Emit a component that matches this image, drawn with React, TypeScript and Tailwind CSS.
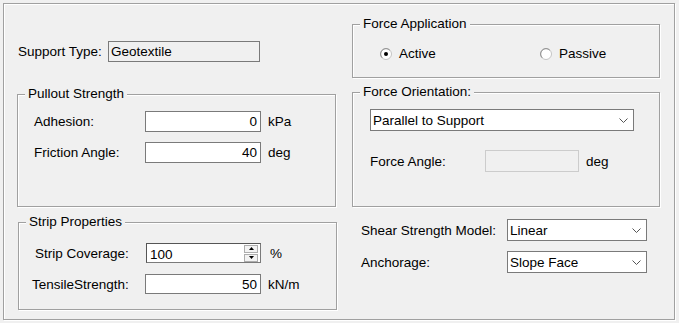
import React from "react";

const Chevron = () => (
  <svg width="9" height="5" viewBox="0 0 9 5" className="shrink-0">
    <polyline points="0.5,0.5 4.5,4.5 8.5,0.5" fill="none" stroke="#555" strokeWidth="1" />
  </svg>
);

const Radio = ({ checked }: { checked?: boolean }) => (
  <svg width="12" height="12" viewBox="0 0 12 12" className="shrink-0">
    <circle cx="6" cy="6" r="5.5" fill="#fff" stroke="#c4c4c4" />
    <path d="M2.2 9.8 A5 5 0 0 1 9.8 2.2" fill="none" stroke="#8e8e8e" strokeWidth="1" />
    {checked && <circle cx="6" cy="6" r="2" fill="#000" />}
  </svg>
);

const Group = ({
  title,
  className,
  children,
}: {
  title: string;
  className: string;
  children?: React.ReactNode;
}) => (
  <div
    className={`relative border border-[#a0a0a0] shadow-[inset_1px_1px_0_#fff,1px_1px_0_#fff] ${className}`}
  >
    <span className="absolute left-[7px] top-[-9px] bg-[#f0f0f0] px-[3px] leading-4">{title}</span>
    {children}
  </div>
);

const NumBox = ({ value, w = "w-[116px]", h = "h-[21px]" }: { value: string; w?: string; h?: string }) => (
  <div className={`flex ${w} ${h} items-center justify-end border border-[#7a7a7a] bg-white pr-[3px] pt-[1px] leading-4`}>
    {value}
  </div>
);

const Select = ({ value, w }: { value: string; w: string }) => (
  <div
    className={`flex ${w} h-[22px] items-center justify-between border border-[#7a7a7a] bg-white pl-[2px] pr-[5px] leading-4`}
  >
    <span className="pt-[1px]">{value}</span>
    <Chevron />
  </div>
);

export default function App() {
  return (
    <div className="h-[323px] w-[679px] bg-[#f0f0f0] p-[3px] text-[13.5px] text-black font-['Liberation_Sans',Arial,sans-serif]">
      <div className="flex h-[317px] w-[672px] border border-[#a0a0a0] shadow-[inset_1px_1px_0_#fff,1px_1px_0_#fff]">
        {/* left column */}
        <div className="ml-[13px] flex w-[320px] flex-col">
          <div className="mt-[37px] flex h-[21px] items-center">
            <span className="ml-[1px] w-[90px] pt-[2px]">Support Type:</span>
            <div className="flex h-[21px] w-[152px] items-center border border-[#7a7a7a] bg-[#f0f0f0] pl-[2px] pt-[1px] leading-4">
              Geotextile
            </div>
          </div>

          <Group title="Pullout Strength" className="mt-[32px] h-[113px] w-[319px] pt-[15px]">
            <div className="flex items-center pl-[16px]">
              <span className="w-[111px] pt-[2px]">Adhesion:</span>
              <NumBox value="0" />
              <span className="ml-[7px] pt-[2px]">kPa</span>
            </div>
            <div className="mt-[9px] flex items-center pl-[16px]">
              <span className="w-[111px] pt-[2px]">Friction Angle:</span>
              <NumBox value="40" />
              <span className="ml-[7px] pt-[2px]">deg</span>
            </div>
          </Group>

          <Group title="Strip Properties" className="ml-[1px] mt-[15px] h-[88px] w-[319px] pt-[19px]">
            <div className="flex items-center pl-[16px]">
              <span className="w-[111px] pt-[2px]">Strip Coverage:</span>
              <div className="flex h-[20px] w-[115px] items-center justify-between border border-[#7a7a7a] border-l-[#555] border-t-[#555] bg-white pl-[3px] pr-[2px] leading-4">
                <span className="pt-[3px]">100</span>
                <div className="flex flex-col gap-[1px]">
                  <div className="flex h-[8px] w-[14px] items-center justify-center border border-[#adadad] bg-[#f3f3f3]">
                    <svg width="5" height="3" viewBox="0 0 5 3">
                      <polygon points="2.5,0 5,3 0,3" fill="#000" />
                    </svg>
                  </div>
                  <div className="flex h-[8px] w-[14px] items-center justify-center border border-[#adadad] bg-[#f3f3f3]">
                    <svg width="5" height="3" viewBox="0 0 5 3">
                      <polygon points="0,0 5,0 2.5,3" fill="#000" />
                    </svg>
                  </div>
                </div>
              </div>
              <span className="ml-[9px] pt-[2px]">%</span>
            </div>
            <div className="mt-[9px] flex items-center pl-[13px]">
              <span className="w-[113px] pt-[2px]">TensileStrength:</span>
              <NumBox value="50" h="h-[20px]" />
              <span className="ml-[7px] pt-[2px]">kN/m</span>
            </div>
          </Group>
        </div>

        {/* right column */}
        <div className="ml-[15px] flex w-[308px] flex-col">
          <Group title="Force Application" className="mt-[20px] h-[54px] w-[308px]">
            <div className="mt-[21px] flex h-[16px] items-center pl-[27px]">
              <div className="flex w-[160px] items-center gap-[7px]">
                <Radio checked />
                <span>Active</span>
              </div>
              <div className="flex items-center gap-[7px]">
                <Radio />
                <span>Passive</span>
              </div>
            </div>
          </Group>

          <Group title="Force Orientation:" className="mt-[14px] h-[115px] w-[308px] pt-[16px]">
            <div className="pl-[17px]">
              <Select value="Parallel to Support" w="w-[264px]" />
            </div>
            <div className="mt-[19px] flex items-center pl-[17px]">
              <span className="w-[115px] pt-[2px]">Force Angle:</span>
              <div className="h-[22px] w-[94px] border border-[#cccccc] bg-[#f0f0f0]" />
              <span className="ml-[7px] pt-[2px]">deg</span>
            </div>
          </Group>

          <div className="mt-[12px] flex items-center pl-[9px]">
            <span className="w-[146px] pt-[2px]">Shear Strength Model:</span>
            <Select value="Linear" w="w-[140px]" />
          </div>
          <div className="mt-[10px] flex items-center pl-[9px]">
            <span className="w-[146px] pt-[2px]">Anchorage:</span>
            <Select value="Slope Face" w="w-[140px]" />
          </div>
        </div>
      </div>
    </div>
  );
}
